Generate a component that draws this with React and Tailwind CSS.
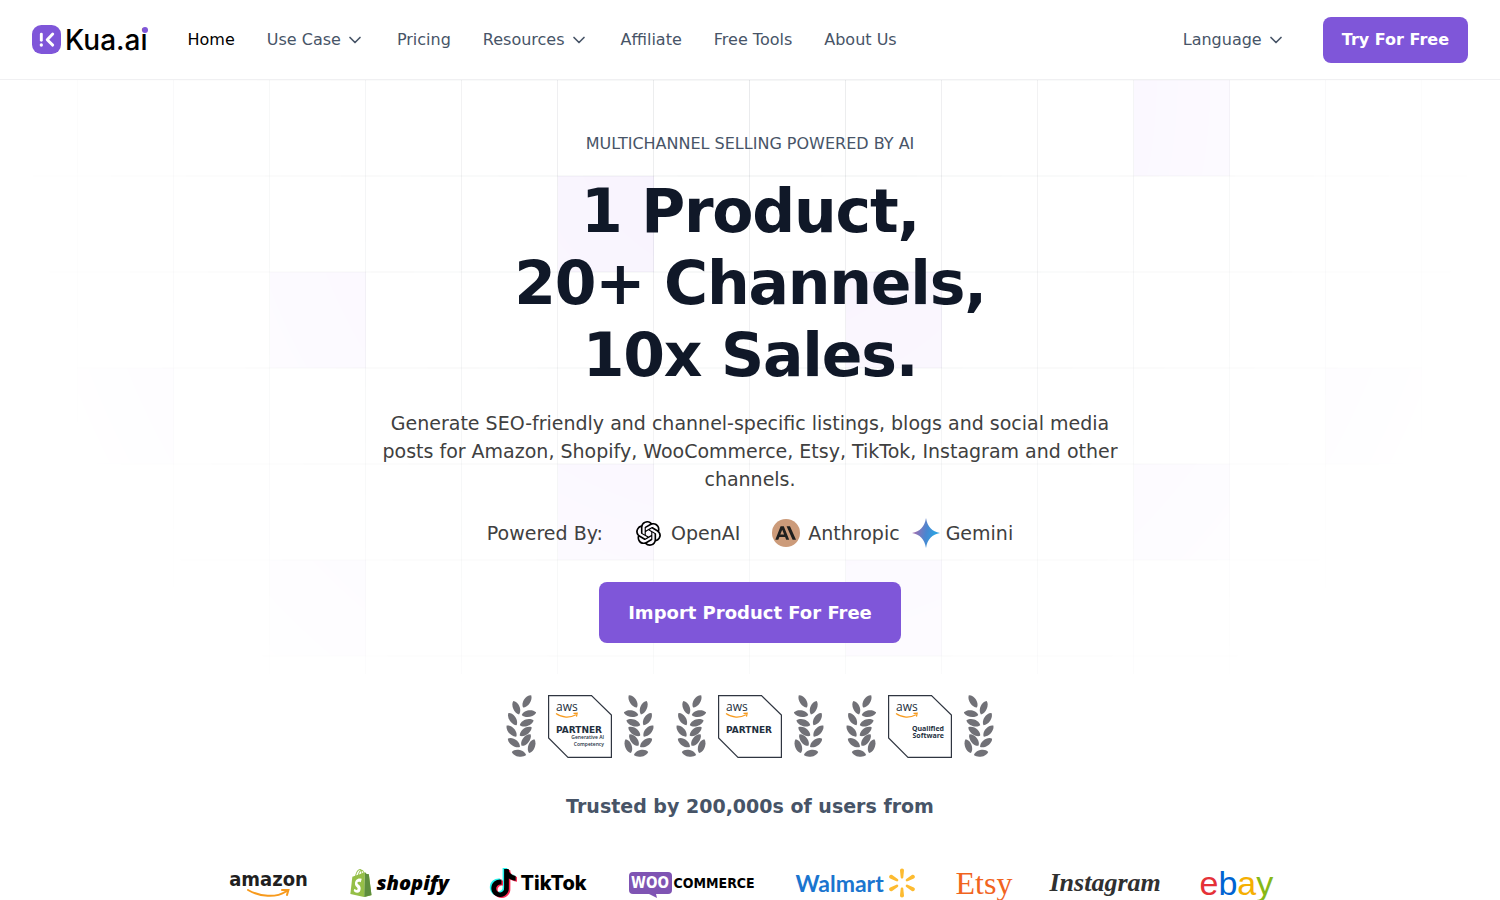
import { SiOpenai, SiShopify, SiTiktok } from "react-icons/si";

const CELL = 96;
const TINTED_CELLS = [
  [4, 0],
  [-2, 1],
  [-5, 2],
  [1, 2],
  [-7, 3],
  [6, 3],
  [-2, 4],
  [4, 4],
  [-5, 5],
  [1, 5],
];

function GridBackdrop() {
  return (
    <svg
      aria-hidden="true"
      className="pointer-events-none absolute inset-x-0 top-0 -z-10 h-[594px] w-full [mask-image:radial-gradient(760px_820px_at_top,white,transparent)]"
    >
      <svg x="50%" overflow="visible">
        {TINTED_CELLS.map(([col, row]) => (
          <rect key={`${col},${row}`} x={col * CELL} y={row * CELL} width={CELL} height={CELL} fill="#f7f1fe" />
        ))}
        {Array.from({ length: 41 }, (_, i) => i - 20).map((col) => (
          <path key={col} d={`M${col * CELL - 0.5} 0V594`} stroke="#101828" strokeOpacity="0.09" />
        ))}
        {[0, 1, 2, 3, 4, 5, 6].map((row) => (
          <path key={row} d={`M-1920 ${row * CELL}H1920`} stroke="#101828" strokeOpacity="0.08" />
        ))}
      </svg>
    </svg>
  );
}

function Chevron() {
  return (
    <svg className="size-5" viewBox="0 0 20 20" fill="none" aria-hidden="true">
      <path d="M5 7.5l5 5 5-5" stroke="currentColor" strokeWidth="1.67" strokeLinecap="round" strokeLinejoin="round" />
    </svg>
  );
}

function KuaLogo() {
  return (
    <a href="#home" aria-label="Kua.ai" className="flex items-center gap-1">
      <svg className="size-[29px]" viewBox="0 0 28 28" aria-hidden="true">
        <rect width="28" height="28" rx="9" fill="#7f56d9" />
        <g stroke="#fff" strokeLinecap="round" strokeLinejoin="round" fill="none">
          <path d="M9 8.8v6" strokeWidth="2.8" />
          <path d="M20 8.7l-5.3 5.5 5.3 5.2" strokeWidth="2.8" />
        </g>
        <circle cx="9" cy="19.3" r="1.6" fill="#fff" />
      </svg>
      <span className="relative font-[Inter,sans-serif] text-[28px] leading-8 font-medium text-black">
        Kua.ai
        <span className="absolute top-[3px] right-0 size-[6px] rounded-full bg-[#7f56d9]" />
      </span>
    </a>
  );
}

const NAV = [
  { label: "Home", active: true },
  { label: "Use Case", menu: true },
  { label: "Pricing" },
  { label: "Resources", menu: true },
  { label: "Affiliate" },
  { label: "Free Tools" },
  { label: "About Us" },
];

function Header() {
  return (
    <header className="flex h-20 items-center justify-between border-b border-[#f0f0f2] bg-white px-8">
      <div className="flex items-center gap-10">
        <KuaLogo />
        <nav className="flex items-center gap-8">
          {NAV.map((item) =>
            item.menu ? (
              <button key={item.label} type="button" className="flex items-center gap-1 text-[#475467]">
                {item.label}
                <Chevron />
              </button>
            ) : (
              <a key={item.label} href="#nav" className={item.active ? "text-black" : "text-[#475467]"}>
                {item.label}
              </a>
            )
          )}
        </nav>
      </div>
      <div className="flex items-center gap-[37px]">
        <button type="button" className="flex items-center gap-1 text-[#475467]">
          Language
          <Chevron />
        </button>
        <button type="button" className="rounded-lg bg-[#7f56d9] px-[19px] py-[11px] font-bold text-white">
          Try For Free
        </button>
      </div>
    </header>
  );
}

function AnthropicMark() {
  return (
    <svg className="size-7" viewBox="0 0 28 28" aria-hidden="true">
      <circle cx="14" cy="14" r="14" fill="#cc9b7a" />
      <path
        fill="#1f1f1e"
        fillRule="evenodd"
        d="M8.6 7.2h3.2l5.4 13.5h-3l-1.1-2.8H7.4l-1.1 2.8h-3zM8.3 15.5h3.8l-1.9-4.8zM14.6 7.2h3.4l6 13.5h-3.4z"
      />
    </svg>
  );
}

function GeminiMark() {
  return (
    <svg className="h-8 w-7" viewBox="0 0 28 32" aria-hidden="true">
      <defs>
        <linearGradient id="gemini" x1="0" y1="0.4" x2="1" y2="0.6">
          <stop offset="0.1" stopColor="#9a70b2" />
          <stop offset="0.5" stopColor="#4a86d0" />
          <stop offset="0.8" stopColor="#2f9fe0" />
        </linearGradient>
      </defs>
      <path fill="url(#gemini)" d="M14 1c1.500 9 6 13.500 14 15c-8 1.500-12.500 6-14 15c-1.500-9-6-13.500-14-15c8-1.500 12.500-6 14-15z" />
    </svg>
  );
}

const LEAVES = [
  [63, 19, -55],
  [31, 38, 68],
  [69, 56, -8],
  [20, 72, 58],
  [62, 83, -18],
  [17, 108, 50],
  [59, 109, -35],
  [24, 143, 36],
  [60, 135, -50],
  [77, 153, -68],
  [39, 175, 14],
];

function Laurel({ flip }) {
  return (
    <svg className="h-[63px] w-[30px]" viewBox="0 0 90 189" aria-hidden="true">
      <g fill="#717177" transform={flip ? "translate(90 0) scale(-1 1)" : undefined}>
        {LEAVES.map(([x, y, angle]) => (
          <path
            key={`${x},${y}`}
            transform={`translate(${x} ${y}) rotate(${angle})`}
            d="M-22 1C-16-12 12-15 22 0C13 13-14 13-22 1z"
          />
        ))}
      </g>
    </svg>
  );
}

function AwsBadge({ children, label }) {
  return (
    <div className="flex items-center gap-3">
      <Laurel />
      <svg className="h-[63px] w-16" viewBox="0 0 64 63" role="img" aria-label={label}>
        <path d="M.6.6H43.500L63.400 20V62.400H20L.6 43z" fill="#fff" stroke="#2f3540" strokeWidth="1.2" />
        <text x="8" y="16" fontSize="12" fill="#232f3e" fontFamily="Open Sans, sans-serif" fontWeight="500">
          aws
        </text>
        <path d="M8 18.500c6 4.500 14 4.500 20 1.300M25.500 18.400l3.700-.2-.7 3.500" fill="none" stroke="#f79a1c" strokeWidth="1.2" />
        {children}
      </svg>
      <Laurel flip />
    </div>
  );
}

function PartnerTitle() {
  return (
    <text x="8" y="38" fontSize="9" fontWeight="700" fill="#232f3e" fontFamily="DejaVu Sans, sans-serif">
      PARTNER
    </text>
  );
}

function Badges() {
  return (
    <div className="mt-[52px] flex justify-center gap-[22px]">
      <AwsBadge label="AWS Partner, Generative AI Competency">
        <PartnerTitle />
        <g fontSize="5" fontWeight="600" fill="#232f3e" textAnchor="end" fontFamily="Open Sans, sans-serif">
          <text x="56" y="44">Generative AI</text>
          <text x="56" y="51">Competency</text>
        </g>
      </AwsBadge>
      <AwsBadge label="AWS Partner">
        <PartnerTitle />
      </AwsBadge>
      <AwsBadge label="AWS Qualified Software">
        <g fontSize="7" fontWeight="700" fill="#232f3e" textAnchor="end" fontFamily="Open Sans, sans-serif">
          <text x="56" y="36">Qualified</text>
          <text x="56" y="43">Software</text>
        </g>
      </AwsBadge>
    </div>
  );
}

function Amazon() {
  return (
    <div className="flex w-20 flex-col items-center">
      <span className="font-['DejaVu_Sans_Condensed','DejaVu_Sans',sans-serif] text-xl leading-5 font-bold text-[#221f1f]">amazon</span>
      <svg className="h-2 w-11" viewBox="0 0 44 8" aria-hidden="true">
        <path d="M1 1c12 7 28 8 38 1.500M35 1l6.500-.3-1.500 5.300" fill="none" stroke="#f79a1c" strokeWidth="2" strokeLinecap="round" />
      </svg>
    </div>
  );
}

function Shopify() {
  return (
    <div className="flex w-[100px] items-center gap-1">
      <svg className="h-7 w-6 shrink-0" viewBox="0 0 24 24" preserveAspectRatio="none" aria-hidden="true">
        <path d="M4 7l12-3v18l-13-2z" fill="#fff" />
        <SiShopify size={24} color="#95bf47" />
        <path d="M15.300 23.980l7.200-1.700-2.700-17.700-2.200-.2-1.700-1.500z" fill="#5e8e3e" />
      </svg>
      <span className="font-['Open_Sans',sans-serif] text-xl leading-7 font-extrabold text-black italic">shopify</span>
    </div>
  );
}

function TikTok() {
  return (
    <div className="flex w-[100px] items-center gap-1">
      <svg className="h-[30px] w-7 shrink-0" viewBox="0 0 28 30" aria-hidden="true">
        <SiTiktok x="-1" y="0" size={28} color="#25f4ee" />
        <SiTiktok x="2" y="2" size={28} color="#fe2c55" />
        <SiTiktok x="0.500" y="1" size={28} color="#000" />
      </svg>
      <span className="font-[Inter,sans-serif] text-xl leading-7 font-extrabold text-black">TikTok</span>
    </div>
  );
}

function WooCommerce() {
  return (
    <div className="flex w-[127px] items-center gap-[2px]">
      <span className="relative flex h-[22px] w-[43px] shrink-0 items-center justify-center rounded-[4px] bg-[#7f54b3]">
        <span className="font-['DejaVu_Sans_Condensed','DejaVu_Sans',sans-serif] text-[15px] leading-5 font-bold text-white">WOO</span>
        <svg className="absolute top-full left-5 h-1 w-2" viewBox="0 0 8 4" aria-hidden="true">
          <path d="M0 0h7l1 4z" fill="#7f54b3" />
        </svg>
      </span>
      <span className="font-['DejaVu_Sans_Condensed','DejaVu_Sans',sans-serif] text-sm leading-5 font-bold text-black">COMMERCE</span>
    </div>
  );
}

function Walmart() {
  return (
    <div className="flex w-[120px] items-center justify-between">
      <span className="font-[Lato,sans-serif] text-[23px] leading-7 font-bold text-[#1a75cf]">Walmart</span>
      <svg className="h-[30px] w-7 shrink-0" viewBox="0 0 28 30" aria-hidden="true">
        {[0, 60, 120, 180, 240, 300].map((angle) => (
          <path
            key={angle}
            transform={`rotate(${angle} 14 15)`}
            d="M14 10.500c-.8 0-1.200-.4-1.300-1.200l-.7-6.800c0-1.300.8-2 2-2s2 .7 2 2l-.7 6.800c-.1.800-.5 1.200-1.300 1.200z"
            fill="#fdbb30"
          />
        ))}
      </svg>
    </div>
  );
}

function Brands() {
  return (
    <div className="mt-[45px] flex h-9 items-center justify-center gap-10">
      <Amazon />
      <Shopify />
      <TikTok />
      <WooCommerce />
      <Walmart />
      <span className="w-[54px] font-['Liberation_Serif',serif] text-[32px] leading-8 text-[#f1641e]">Etsy</span>
      <span className="w-[110px] font-['Liberation_Serif',serif] text-[26px] leading-8 font-bold text-[#303030] italic">Instagram</span>
      <span className="flex w-[72px] font-['Liberation_Sans',sans-serif] text-[34px] leading-8">
        <span className="text-[#e53238]">e</span>
        <span className="text-[#0064d2]">b</span>
        <span className="text-[#f5af02]">a</span>
        <span className="text-[#86b817]">y</span>
      </span>
    </div>
  );
}

export default function App() {
  return (
    <div className="bg-white font-['DejaVu_Sans',sans-serif] text-base">
      <Header />
      <main className="relative isolate pt-[52px] text-center">
        <GridBackdrop />
        <p className="leading-6 text-[#475467]">MULTICHANNEL SELLING POWERED BY AI</p>
        <h1 className="mt-[19px] text-6xl leading-[72px] font-bold tracking-[-0.02em] text-[#101828]">
          1 Product,
          <br />
          20+ Channels,
          <br />
          10x Sales.
        </h1>
        <p className="mx-auto mt-[18px] max-w-3xl text-[19px] leading-7 text-[#404040]">
          Generate SEO-friendly and channel-specific listings, blogs and social media posts for Amazon, Shopify,
          WooCommerce, Etsy, TikTok, Instagram and other channels.
        </p>
        <div className="mt-6 flex h-8 items-center justify-center gap-8 text-[19px] leading-7 text-[#404040]">
          <span>Powered By:</span>
          <span className="flex items-center gap-2">
            <span className="flex size-7 items-center justify-center text-black">
              <SiOpenai size={25} aria-hidden="true" />
            </span>
            OpenAI
          </span>
          <span className="flex items-center gap-3">
            <span className="flex items-center gap-2">
              <AnthropicMark />
              Anthropic
            </span>
            <span className="flex items-center gap-[6px]">
              <GeminiMark />
              Gemini
            </span>
          </span>
        </div>
        <button
          type="button"
          className="mt-[33px] rounded-lg bg-[#7f56d9] px-[29px] py-4 text-lg leading-[29px] font-bold text-white"
        >
          Import Product For Free
        </button>
        <Badges />
        <h2 className="mt-[34px] text-[19px] leading-7 font-bold text-[#475467]">Trusted by 200,000s of users from</h2>
        <Brands />
      </main>
    </div>
  );
}
